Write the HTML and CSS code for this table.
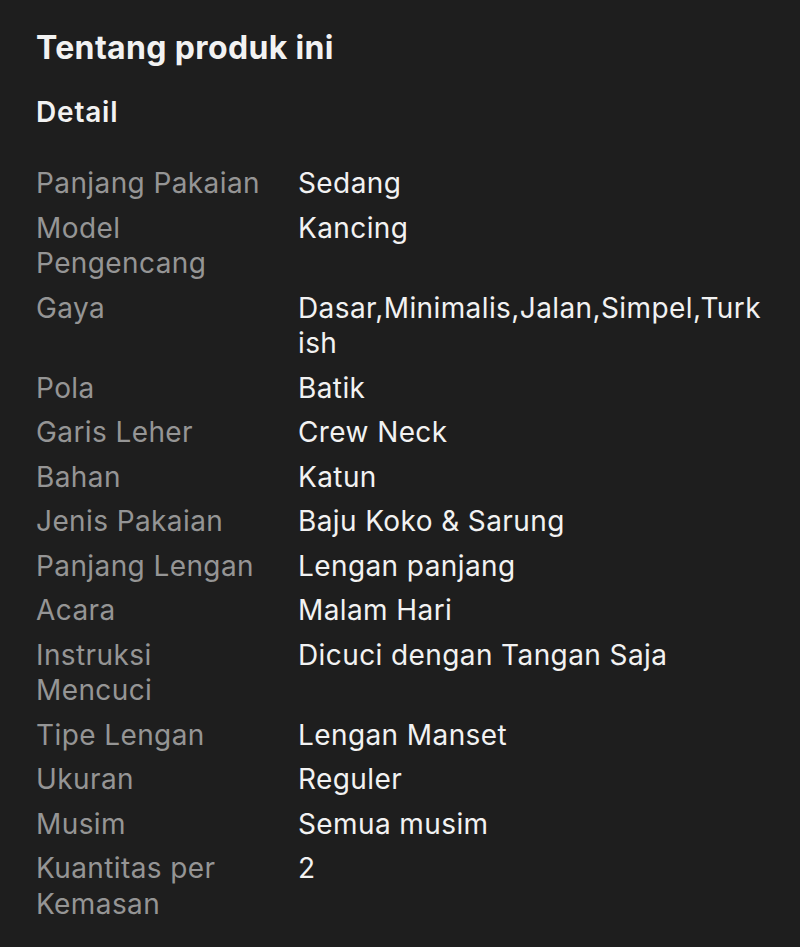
FILE: index.html
```html
<!DOCTYPE html>
<html lang="id">
<head>
<meta charset="utf-8">
<link rel="stylesheet" href="styles.css">
</head>
<body>
<main class="page">
  <h1 class="title">Tentang produk ini</h1>
  <h2 class="subtitle">Detail</h2>
  <dl class="specs">
    <dt>Panjang Pakaian</dt><dd>Sedang</dd>
    <dt>Model Pengencang</dt><dd>Kancing</dd>
    <dt>Gaya</dt><dd>Dasar,Minimalis,Jalan,Simpel,Turkish</dd>
    <dt>Pola</dt><dd>Batik</dd>
    <dt>Garis Leher</dt><dd>Crew Neck</dd>
    <dt>Bahan</dt><dd>Katun</dd>
    <dt>Jenis Pakaian</dt><dd>Baju Koko &amp; Sarung</dd>
    <dt>Panjang Lengan</dt><dd>Lengan panjang</dd>
    <dt>Acara</dt><dd>Malam Hari</dd>
    <dt>Instruksi Mencuci</dt><dd>Dicuci dengan Tangan Saja</dd>
    <dt>Tipe Lengan</dt><dd>Lengan Manset</dd>
    <dt>Ukuran</dt><dd>Reguler</dd>
    <dt>Musim</dt><dd>Semua musim</dd>
    <dt>Kuantitas per Kemasan</dt><dd>2</dd>
  </dl>
</main>
</body>
</html>
```
FILE: styles.css
```css
html, body {
  margin: 0;
  padding: 0;
  background: #1e1e1e;
}
body {
  font-family: Inter, "Noto Sans", sans-serif;
  color: #f2f2f2;
}
.page {
  padding: 27px 36px 0 36px;
}
.title {
  margin: 0;
  font-size: 32px;
  font-weight: 700;
  line-height: 42px;
  letter-spacing: 0.35px;
}
.subtitle {
  margin: 25px 0 0 0;
  font-size: 28px;
  font-weight: 600;
  line-height: 36px;
  letter-spacing: 0.8px;
}
.specs {
  margin: 36px 0 0 0;
  display: grid;
  grid-template-columns: 240px 1fr;
  column-gap: 22px;
  row-gap: 9px;
  font-size: 28px;
  line-height: 35.5px;
  letter-spacing: 0.4px;
}
.specs dt {
  color: #959595;
  margin: 0;
}
.specs dd {
  margin: 0;
  color: #f2f2f2;
  word-break: break-all;
}
```
